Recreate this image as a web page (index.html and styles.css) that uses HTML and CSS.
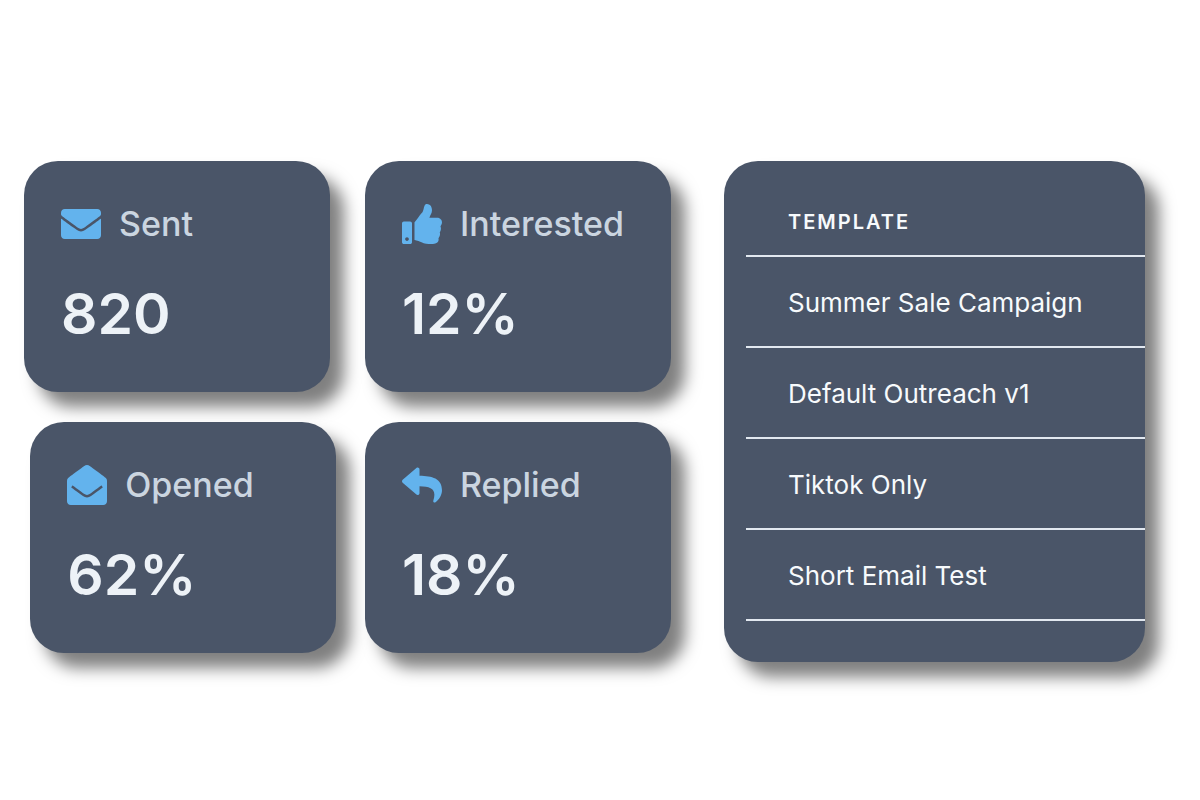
FILE: index.html
```html
<!DOCTYPE html>
<html lang="en">
<head>
    <meta charset="UTF-8">
    <meta name="viewport" content="width=device-width, initial-scale=1.0">
    <title>Campaign Stats</title>
    <link rel="stylesheet" href="styles.css">
</head>
<body>
    <main class="dashboard">
        <div class="stats-column">
            <section class="card">
                <h2 class="card-label">
                    <svg class="icon" viewBox="0 0 512 512" aria-hidden="true"><path d="M502.3 190.8c3.9-3.1 9.7-.2 9.7 4.7V400c0 26.5-21.5 48-48 48H48c-26.5 0-48-21.5-48-48V195.6c0-5 5.7-7.8 9.7-4.7 22.4 17.4 52.1 39.5 154.1 113.6 21.1 15.4 56.7 47.8 92.2 47.6 35.7.3 72-32.8 92.3-47.6 102-74.1 131.6-96.3 154-113.7zM256 320c23.2.4 56.6-29.2 73.4-41.4 132.7-96.3 142.8-104.7 173.4-128.7 5.8-4.5 9.2-11.5 9.2-18.9v-19c0-26.5-21.5-48-48-48H48c-26.5 0-48 21.5-48 48v19c0 7.4 3.4 14.3 9.2 18.9 30.6 23.9 40.7 32.4 173.4 128.7 16.8 12.2 50.2 41.8 73.4 41.4z"/></svg>
                    Sent
                </h2>
                <p class="card-value">820</p>
            </section>
            <section class="card card-end">
                <h2 class="card-label">
                    <svg class="icon" viewBox="0 0 512 512" aria-hidden="true"><path d="M512 464c0 26.51-21.49 48-48 48H48c-26.51 0-48-21.49-48-48V200.724a48 48 0 0 1 18.387-37.776c24.913-19.529 45.501-35.365 164.2-121.511C199.412 29.17 232.797-.347 256 .003c23.198-.354 56.596 29.172 73.413 41.433 118.687 86.137 139.303 101.995 164.2 121.512A48 48 0 0 1 512 200.724V464zm-65.666-196.605c-2.563-3.728-7.7-4.595-11.339-1.907-22.845 16.873-55.462 40.705-105.582 77.079-16.825 12.266-50.21 41.781-73.413 41.43-23.211.344-56.559-29.143-73.413-41.43-50.114-36.37-82.734-60.204-105.582-77.079-3.639-2.688-8.776-1.821-11.339 1.907l-9.072 13.196a7.998 7.998 0 0 0 1.839 10.967c22.887 16.899 55.454 40.69 105.303 76.868 20.274 14.781 56.524 47.813 92.264 47.573 35.724.242 71.961-32.771 92.263-47.573 49.85-36.179 82.418-59.97 105.303-76.868a7.998 7.998 0 0 0 1.839-10.967l-9.071-13.196z"/></svg>
                    Opened
                </h2>
                <p class="card-value">62%</p>
            </section>
        </div>

        <div class="stats-column">
            <section class="card">
                <h2 class="card-label">
                    <svg class="icon" viewBox="0 0 512 512" aria-hidden="true"><path d="M104 224H24c-13.255 0-24 10.745-24 24v240c0 13.255 10.745 24 24 24h80c13.255 0 24-10.745 24-24V248c0-13.255-10.745-24-24-24zM64 472c-13.255 0-24-10.745-24-24s10.745-24 24-24 24 10.745 24 24-10.745 24-24 24zM384 81.452c0 42.416-25.97 66.208-33.277 94.548h101.723c33.397 0 59.397 27.746 59.553 58.098.084 17.938-7.546 37.249-19.439 49.197l-.11.11c9.836 23.337 8.237 56.037-9.308 79.469 8.681 25.895-.069 57.704-16.382 74.757 4.298 17.598 2.244 32.575-6.148 44.632C440.202 511.587 389.616 512 346.839 512l-2.845-.001c-48.287-.017-87.806-17.598-119.56-31.725-15.957-7.099-36.821-15.887-52.651-16.178-6.54-.12-11.783-5.457-11.783-11.998v-213.77c0-3.2 1.282-6.271 3.558-8.521 39.614-39.144 56.648-80.587 89.117-113.111 14.804-14.832 20.188-37.236 25.393-58.902C282.515 39.293 291.817 0 312 0c24 0 72 8 72 81.452z"/></svg>
                    Interested
                </h2>
                <p class="card-value">12%</p>
            </section>
            <section class="card">
                <h2 class="card-label">
                    <svg class="icon" viewBox="0 0 512 512" aria-hidden="true"><path d="M8.309 189.836L184.313 37.851C199.719 24.546 224 35.347 224 56.015v80.053c160.629 1.839 288 34.032 288 186.258 0 61.441-39.581 122.309-83.333 154.132-13.653 9.931-33.111-2.533-28.077-18.631 45.344-145.012-21.507-183.51-176.59-185.742V360c0 20.7-24.3 31.453-39.687 18.164l-176.004-152c-11.071-9.562-11.086-26.753 0-36.328z"/></svg>
                    Replied
                </h2>
                <p class="card-value">18%</p>
            </section>
        </div>

        <section class="templates">
            <table class="templates-table">
                <thead>
                    <tr><th scope="col">Template</th></tr>
                </thead>
                <tbody>
                    <tr><td>Summer Sale Campaign</td></tr>
                    <tr><td>Default Outreach v1</td></tr>
                    <tr><td>Tiktok Only</td></tr>
                    <tr><td>Short Email Test</td></tr>
                </tbody>
            </table>
        </section>
    </main>
</body>
</html>
```
FILE: styles.css
```css
* {
    box-sizing: border-box;
}

body {
    margin: 0;
    background-color: #fff;
    font-family: Inter, "Liberation Sans", sans-serif;
}

.dashboard {
    display: grid;
    grid-template-columns: 341fr 359fr 421fr;
    align-items: start;
    padding: 161px 55px 40px 24px;
}

.stats-column {
    display: flex;
    flex-direction: column;
    gap: 30px;
    margin-right: 29px;
}

.stats-column + .stats-column {
    margin-right: 53px;
}

.card,
.templates {
    background-color: #4a5568;
    border-radius: 34px;
    box-shadow: 14px 15px 16px rgba(0, 0, 0, 0.5);
}

.card {
    padding: 39px 20px 42px 37px;
}

.stats-column:first-child .card {
    width: 98%;
}

.stats-column .card-end {
    align-self: flex-end;
}

.card-label {
    display: flex;
    align-items: center;
    gap: 18px;
    margin: 0;
    color: #cbd5e0;
    font-size: 34px;
    font-weight: 500;
    line-height: 48px;
}

.icon {
    flex: none;
    width: 40px;
    height: 40px;
    fill: #63b3ed;
}

.card-value {
    margin: 30px 0 0;
    color: #edf2f7;
    font-size: 57px;
    font-weight: 600;
    line-height: 72px;
}

.templates {
    padding: 26px 0 41px 22px;
}

.templates-table {
    width: 100%;
    border-spacing: 0;
    color: #f7fafc;
    text-align: left;
}

.templates-table th,
.templates-table td {
    padding: 2px 20px 0 42px;
    border-bottom: 2px solid #e2e8f0;
}

.templates-table th {
    height: 70px;
    font-size: 20px;
    font-weight: 600;
    letter-spacing: 2px;
    text-transform: uppercase;
}

.templates-table td {
    height: 91px;
    font-size: 26px;
}
```
